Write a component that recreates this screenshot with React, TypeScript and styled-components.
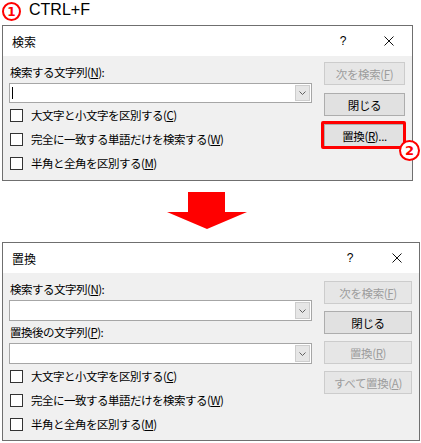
import React from "react";
import styled, { createGlobalStyle } from "styled-components";

const GlobalStyle = createGlobalStyle`
  html, body {
    margin: 0;
    padding: 0;
    background: #ffffff;
  }
  body {
    font-family: "Noto Sans CJK JP", "Noto Sans", sans-serif;
    color: #000;
  }
`;

const Page = styled.div`
  width: 421px;
  height: 443px;
  overflow: hidden;
  display: flex;
  flex-direction: column;
`;

const Header = styled.div`
  height: 25px;
  display: flex;
  align-items: flex-start;
  padding-left: 2px;
  gap: 8px;
`;

const Badge = styled.span`
  box-sizing: border-box;
  width: 19px;
  height: 19px;
  margin-top: 2px;
  border: 2.5px solid #f00;
  border-radius: 50%;
  background: #fff;
  color: #f00;
  font-family: "DejaVu Sans", sans-serif;
  font-weight: bold;
  font-size: 12px;
  line-height: 14px;
  display: flex;
  align-items: center;
  justify-content: center;
`;

const Shortcut = styled.span`
  font-family: "Liberation Sans", Arial, sans-serif;
  font-size: 16px;
  line-height: 20px;
`;

const Dialog = styled.div<{ $width: number }>`
  box-sizing: border-box;
  width: ${({ $width }) => $width}px;
  margin-left: 2px;
  border: 1px solid #6f6f6f;
  background: #f0f0f0;
  display: flex;
  flex-direction: column;
`;

const TitleBar = styled.div<{ $helpGap: number }>`
  height: 30px;
  background: #fff;
  display: flex;
  align-items: center;
  padding-left: 9px;
  font-size: 12px;

  & > b {
    margin-right: ${({ $helpGap }) => $helpGap}px;
  }
`;

const TitleText = styled.span`
  flex: 1;
`;

const HelpMark = styled.b`
  width: 20px;
  font-weight: normal;
  font-family: "Liberation Sans", Arial, sans-serif;
  font-size: 12px;
  text-align: center;
`;

const CloseMark = styled.span<{ $width: number }>`
  width: ${({ $width }) => $width}px;
  display: flex;
  justify-content: center;
`;

const Body = styled.div<{ $buttonTop: number; $bottom: number }>`
  display: grid;
  grid-template-columns: 303px 1fr;
  column-gap: 12px;
  padding: 0 7px ${({ $bottom }) => $bottom}px 6px;

  & > aside {
    padding-top: ${({ $buttonTop }) => $buttonTop}px;
  }
`;

const Fields = styled.div`
  display: flex;
  flex-direction: column;
  padding-top: 8px;
`;

const Label = styled.div<{ $gap?: number }>`
  font-size: 11.5px;
  letter-spacing: -0.5px;
  line-height: 16px;
  height: 16px;
  margin-top: ${({ $gap }) => $gap ?? 0}px;
  padding-left: 1px;
`;

const Combo = styled.div<{ $height: number }>`
  box-sizing: border-box;
  margin-top: 3px;
  height: ${({ $height }) => $height}px;
  background: #fff;
  border: 1px solid #a6a6a6;
  display: flex;
  align-items: stretch;
  justify-content: space-between;
`;

const Caret = styled.span`
  width: 1px;
  background: #000;
  margin: 3px 0 3px 2px;
`;

const DropButton = styled.span`
  box-sizing: border-box;
  width: 15px;
  margin: 1px;
  background: #e6e6e6;
  border: 1px solid #cdcdcd;
  display: flex;
  align-items: center;
  justify-content: center;
`;

const CheckRow = styled.label`
  height: 24px;
  display: flex;
  align-items: center;
  gap: 8px;
  padding-left: 1px;
  font-size: 11.5px;
  letter-spacing: -0.5px;
`;

const Box = styled.span`
  box-sizing: border-box;
  width: 13px;
  height: 13px;
  border: 1px solid #333;
  background: #fff;
`;

const Buttons = styled.aside`
  display: flex;
  flex-direction: column;
  gap: 7px;
`;

const Button = styled.div<{ $disabled?: boolean; $gap?: number }>`
  position: relative;
  box-sizing: border-box;
  height: 23px;
  margin-top: ${({ $gap }) => $gap ?? 0}px;
  border: 1px solid ${({ $disabled }) => ($disabled ? "#cccccc" : "#adadad")};
  background: ${({ $disabled }) => ($disabled ? "#e6e6e6" : "#e1e1e1")};
  color: ${({ $disabled }) => ($disabled ? "#9d9d9d" : "#000")};
  font-size: 11.5px;
  letter-spacing: -0.4px;
  display: flex;
  align-items: center;
  justify-content: center;
`;

const Highlight = styled.span`
  position: absolute;
  left: -4px;
  top: -4px;
  right: -2px;
  bottom: -3px;
  border: 3px solid #f00;
  border-radius: 2px;
  pointer-events: none;
`;

const CornerBadge = styled(Badge)`
  position: absolute;
  right: -16px;
  bottom: -15px;
  margin: 0;
  width: 21px;
  height: 21px;
  font-size: 13px;
  letter-spacing: 0;
`;

const ArrowRow = styled.div`
  height: 61px;
  display: flex;
  align-items: flex-start;
  padding: 11px 0 0 167px;
  box-sizing: border-box;
`;

const Chevron = () => (
  <svg width="7" height="4" viewBox="0 0 7 4">
    <path d="M0.5 0.5 L3.5 3.5 L6.5 0.5" fill="none" stroke="#606060" strokeWidth="1" />
  </svg>
);

const Cross = () => (
  <svg width="10" height="10" viewBox="0 0 10 10">
    <path d="M0.5 0.5 L9.5 9.5 M9.5 0.5 L0.5 9.5" stroke="#111" strokeWidth="1" />
  </svg>
);

const Title = ({ text, helpGap, closeWidth }: { text: string; helpGap: number; closeWidth: number }) => (
  <TitleBar $helpGap={helpGap}>
    <TitleText>{text}</TitleText>
    <HelpMark>?</HelpMark>
    <CloseMark $width={closeWidth}>
      <Cross />
    </CloseMark>
  </TitleBar>
);

const Field = ({ caret, height }: { caret?: boolean; height: number }) => (
  <Combo $height={height}>
    {caret ? <Caret /> : <span />}
    <DropButton>
      <Chevron />
    </DropButton>
  </Combo>
);

const Options = () => (
  <>
    <CheckRow>
      <Box />
      <span>
        大文字と小文字を区別する(<u>C</u>)
      </span>
    </CheckRow>
    <CheckRow>
      <Box />
      <span>
        完全に一致する単語だけを検索する(<u>W</u>)
      </span>
    </CheckRow>
    <CheckRow>
      <Box />
      <span>
        半角と全角を区別する(<u>M</u>)
      </span>
    </CheckRow>
  </>
);

export default function App() {
  return (
    <Page>
      <GlobalStyle />
      <Header>
        <Badge>1</Badge>
        <Shortcut>CTRL+F</Shortcut>
      </Header>

      <Dialog $width={411}>
        <Title text="検索" helpGap={13} closeWidth={46} />
        <Body $buttonTop={6} $bottom={5}>
          <Fields>
            <Label>
              検索する文字列(<u>N</u>):
            </Label>
            <Field caret height={20} />
            <Options />
          </Fields>
          <Buttons>
            <Button $disabled>
              次を検索(<u>F</u>)
            </Button>
            <Button $gap={1}>閉じる</Button>
            <Button $gap={1}>
              置換(<u>R</u>)...
              <Highlight />
              <CornerBadge>2</CornerBadge>
            </Button>
          </Buttons>
        </Body>
      </Dialog>

      <ArrowRow>
        <svg width="80" height="37" viewBox="0 0 80 37">
          <path d="M21 0 H58 V20 H80 L40 37 L0 20 H21 Z" fill="#ff0000" />
        </svg>
      </ArrowRow>

      <Dialog $width={418}>
        <Title text="置換" helpGap={15} closeWidth={44} />
        <Body $buttonTop={8} $bottom={4}>
          <Fields>
            <Label>
              検索する文字列(<u>N</u>):
            </Label>
            <Field height={21} />
            <Label $gap={3}>
              置換後の文字列(<u>P</u>):
            </Label>
            <Field height={21} />
            <Options />
          </Fields>
          <Buttons>
            <Button $disabled>
              次を検索(<u>F</u>)
            </Button>
            <Button>閉じる</Button>
            <Button $disabled>
              置換(<u>R</u>)
            </Button>
            <Button $disabled>
              すべて置換(<u>A</u>)
            </Button>
          </Buttons>
        </Body>
      </Dialog>
    </Page>
  );
}
